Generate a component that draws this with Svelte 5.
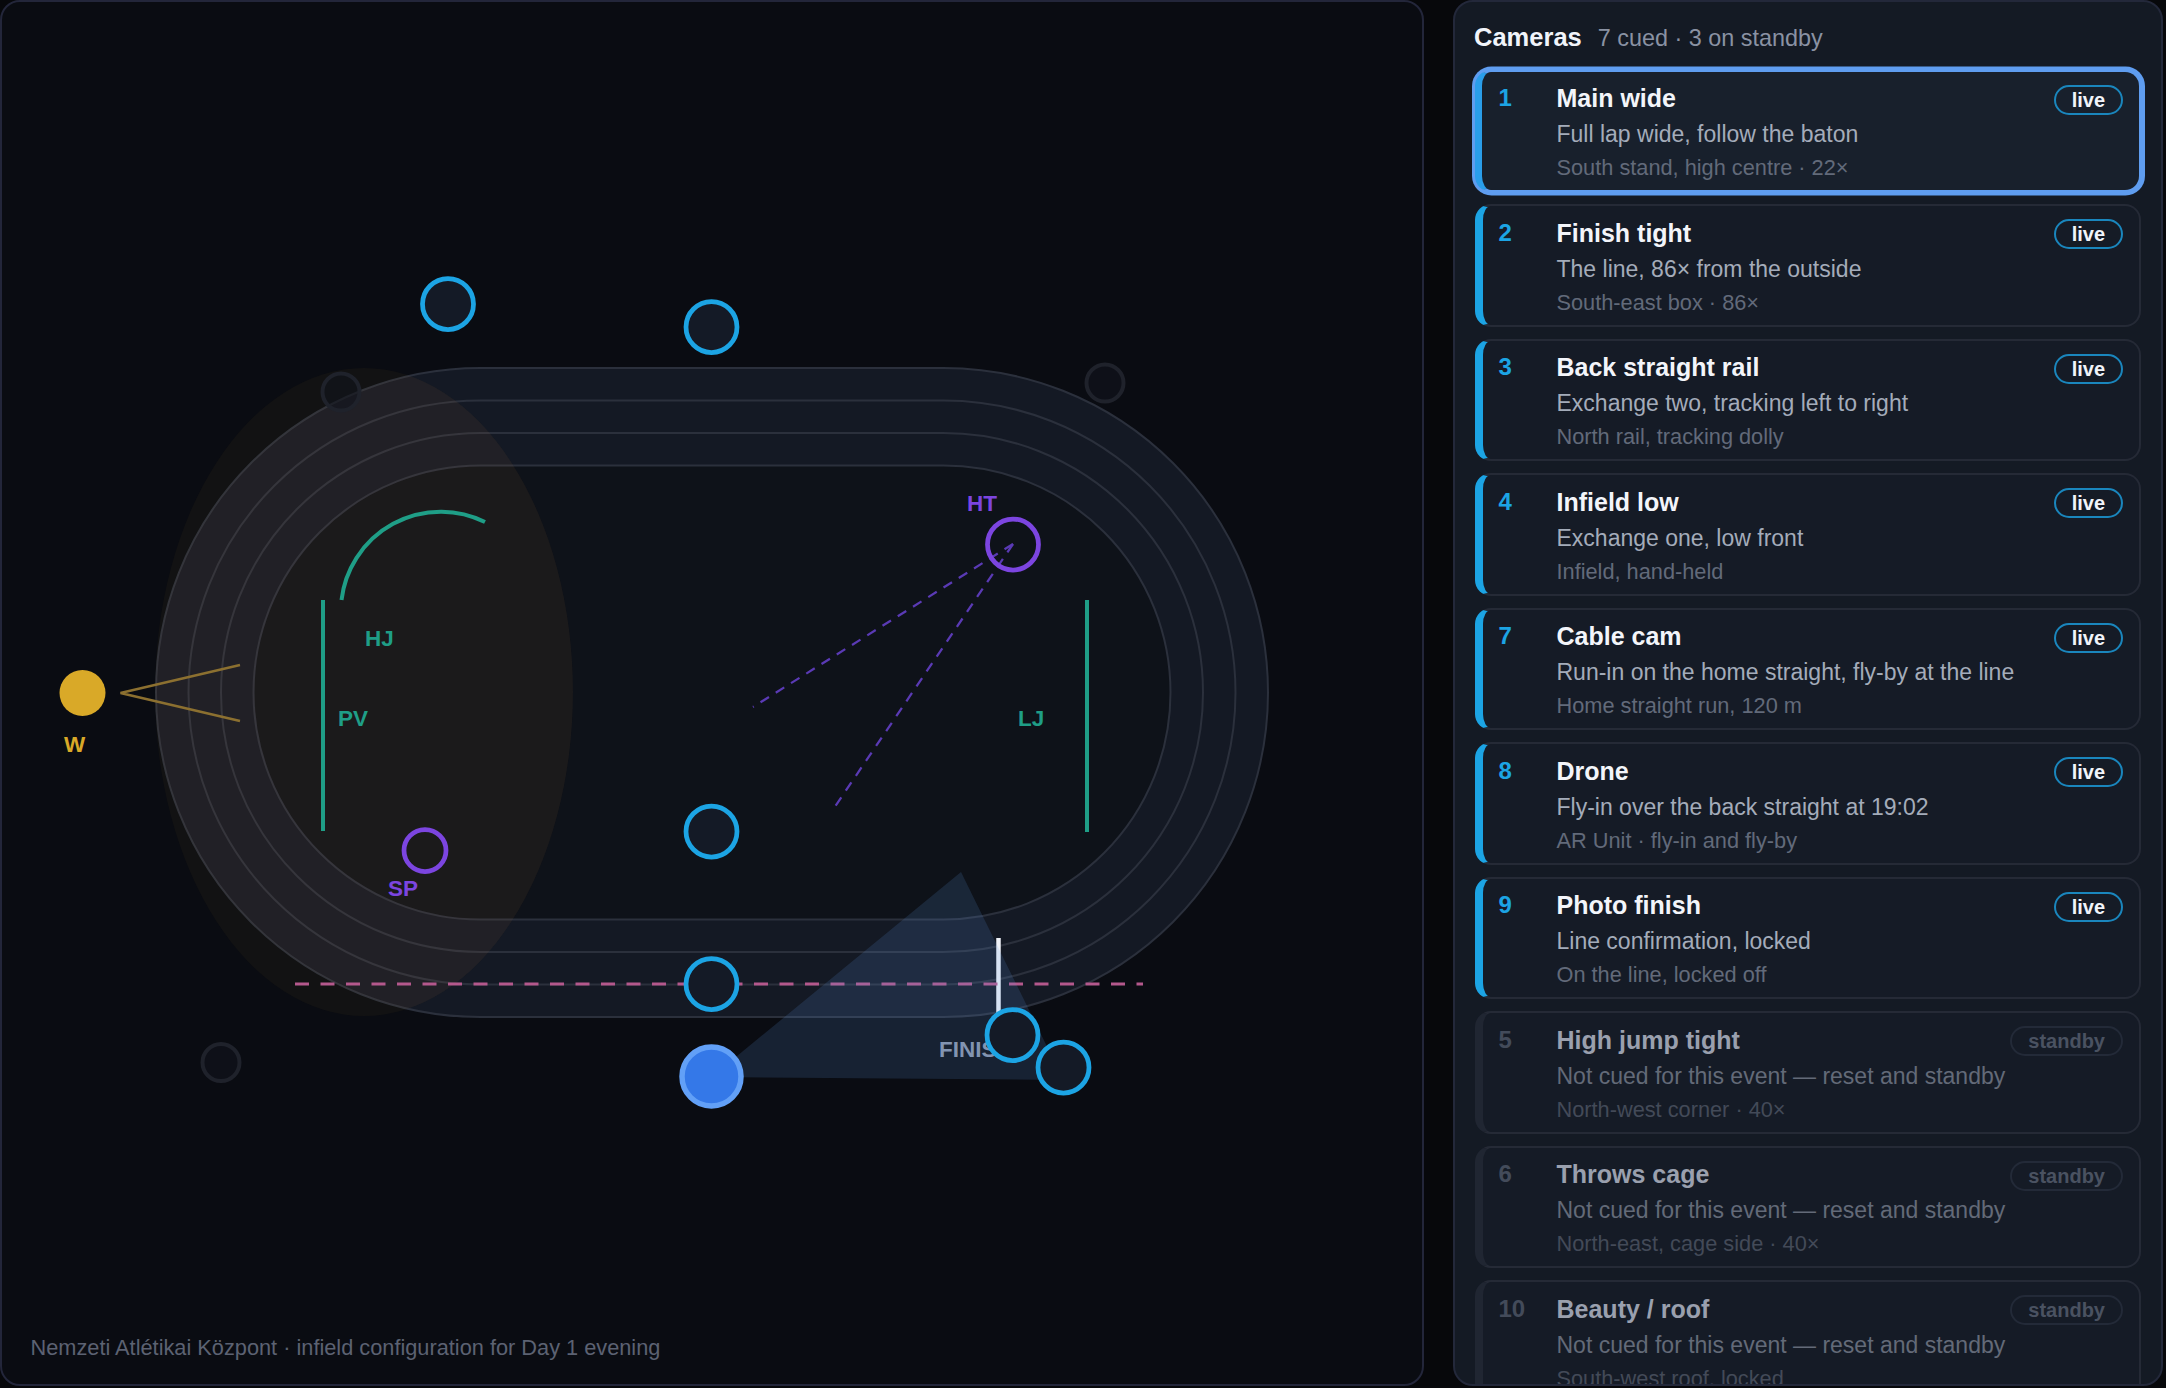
<script>
  const cameras = [
    { n: 1, name: 'Main wide', desc: 'Full lap wide, follow the baton', meta: 'South stand, high centre · 22×', live: true, selected: true },
    { n: 2, name: 'Finish tight', desc: 'The line, 86× from the outside', meta: 'South-east box · 86×', live: true },
    { n: 3, name: 'Back straight rail', desc: 'Exchange two, tracking left to right', meta: 'North rail, tracking dolly', live: true },
    { n: 4, name: 'Infield low', desc: 'Exchange one, low front', meta: 'Infield, hand-held', live: true },
    { n: 7, name: 'Cable cam', desc: 'Run-in on the home straight, fly-by at the line', meta: 'Home straight run, 120 m', live: true },
    { n: 8, name: 'Drone', desc: 'Fly-in over the back straight at 19:02', meta: 'AR Unit · fly-in and fly-by', live: true },
    { n: 9, name: 'Photo finish', desc: 'Line confirmation, locked', meta: 'On the line, locked off', live: true },
    { n: 5, name: 'High jump tight', desc: 'Not cued for this event — reset and standby', meta: 'North-west corner · 40×', live: false },
    { n: 6, name: 'Throws cage', desc: 'Not cued for this event — reset and standby', meta: 'North-east, cage side · 40×', live: false },
    { n: 10, name: 'Beauty / roof', desc: 'Not cued for this event — reset and standby', meta: 'South-west roof, locked', live: false }
  ];
  const lanes = [0, 32.5, 65, 97.5];
  const pins = [
    [448, 304], [711.5, 327], [711.5, 831.5], [711.5, 984], [1012.5, 1035], [1063.5, 1067.5]
  ];
  const dim = [[341, 392], [1105, 383], [221, 1062.5]];
</script>

<div class="page">
  <section class="map">
    <svg class="venue" viewBox="0 0 1424 1386" aria-label="Venue map">
      <defs>
        <clipPath id="trackclip">
          <rect x="156" y="368" width="1112" height="649" rx="324.5" />
        </clipPath>
      </defs>
      <rect class="band" x="156" y="368" width="1112" height="649" rx="324.5" />
      <rect class="infield" x="253.5" y="465.5" width="917" height="454" rx="227" />
      {#each lanes as d}
        <rect class="lane" x={156 + d} y={368 + d} width={1112 - 2 * d} height={649 - 2 * d} rx={324.5 - d} />
      {/each}
      <ellipse class="zone" cx="364" cy="692" rx="209" ry="324" />
      <ellipse class="zone extra" cx="364" cy="692" rx="209" ry="324" clip-path="url(#trackclip)" />

      <path class="field" d="M341.5 600A100 100 0 0 1 485 522" />
      <line class="field" x1="323" y1="600" x2="323" y2="831" />
      <line class="field" x1="1087" y1="600" x2="1087" y2="832" />
      <text class="lbl green" x="365" y="646">HJ</text>
      <text class="lbl green" x="338" y="726">PV</text>
      <text class="lbl green" x="1018" y="726">LJ</text>

      <line class="throw" x1="1013" y1="544" x2="753" y2="707" />
      <line class="throw" x1="1013" y1="544" x2="832" y2="811" />
      <circle class="throwpin" cx="1013" cy="544.5" r="25.5" />
      <circle class="throwpin" cx="425" cy="850.5" r="21" />
      <text class="lbl purple" x="967" y="511">HT</text>
      <text class="lbl purple" x="388" y="896">SP</text>

      <circle class="wind" cx="82.5" cy="693" r="23" />
      <path class="windcone" d="M240 665L120.5 693L240 721" />
      <text class="lbl gold" x="64" y="752">W</text>

      <text class="lbl grey" x="939" y="1057">FINISH</text>
      <line class="finish" x1="998.5" y1="938" x2="998.5" y2="1020" />
      <line class="cut" x1="295" y1="984" x2="1143" y2="984" />
      <path class="cone" d="M711.5 1077L961 872L1063.5 1080Z" />

      {#each dim as [x, y]}
        <circle class="idle" cx={x} cy={y} r="18.5" />
      {/each}
      {#each pins as [x, y]}
        <circle class="pin" cx={x} cy={y} r="25.5" />
      {/each}
      <circle class="main" cx="711.5" cy="1076.5" r="29.5" />
    </svg>
    <p class="caption">Nemzeti Atlétikai Központ · infield configuration for Day 1 evening</p>
  </section>

  <aside class="side">
    <header class="head">
      <h2>Cameras</h2>
      <span>7 cued · 3 on standby</span>
    </header>
    <ul class="list">
      {#each cameras as c}
        <li class="card" class:selected={c.selected} class:off={!c.live}>
          <b class="num">{c.n}</b>
          <div class="body">
            <div class="name">{c.name}</div>
            <div class="desc">{c.desc}</div>
            <div class="meta">{c.meta}</div>
          </div>
          <span class="badge">{c.live ? 'live' : 'standby'}</span>
        </li>
      {/each}
    </ul>
  </aside>
</div>

<style>
  :global(body) {
    margin: 0;
    background: #07080b;
    font-family: "Liberation Sans", Arial, sans-serif;
  }
  .page {
    display: flex;
    gap: 29px;
    width: 2166px;
    height: 1388px;
    padding: 0 3px 2px 0;
    box-sizing: border-box;
    overflow: hidden;
  }
  .map {
    position: relative;
    flex: 0 0 1424px;
    box-sizing: border-box;
    border: 2px solid #23263a;
    border-radius: 20px;
    background: #0a0c12;
    overflow: hidden;
  }
  .venue {
    position: absolute;
    left: -2px;
    top: -2px;
    width: 1424px;
    height: 1386px;
  }
  .caption {
    position: absolute;
    left: 28.5px;
    bottom: 22px;
    margin: 0;
    font-size: 21.75px;
    line-height: 28px;
    color: #5c6272;
  }
  .band { fill: #141924; }
  .infield { fill: #0e1219; }
  .lane { fill: none; stroke: #2b303c; stroke-width: 2; }
  .zone { fill: rgba(212, 165, 40, 0.045); }
  .zone.extra { fill: rgba(235, 140, 110, 0.022); }
  .field { fill: none; stroke: #1f9e87; stroke-width: 4; }
  .lbl { font-size: 22.5px; font-weight: 700; }
  .green { fill: #1f9e87; }
  .purple { fill: #7c45e0; }
  .gold { fill: #d9a928; }
  .grey { fill: #8a94a8; }
  .throw { stroke: #5a3ab5; stroke-width: 2.25; stroke-dasharray: 10 8; }
  .throwpin { fill: none; stroke: #7c45e0; stroke-width: 4.75; }
  .wind { fill: #d9a928; }
  .windcone { fill: none; stroke: #8c7030; stroke-width: 2.5; }
  .finish { stroke: #eef1f7; stroke-width: 4.5; }
  .cut { stroke: #b4588c; stroke-width: 3; stroke-dasharray: 14 11.5; }
  .cone { fill: rgba(96, 150, 225, 0.16); }
  .idle { fill: #10141c; fill-opacity: 0.6; stroke: #1f222b; stroke-width: 4; }
  .pin { fill: #141a26; stroke: #1ca4e4; stroke-width: 4.75; }
  .main { fill: #3478e8; stroke: #62a0f7; stroke-width: 5.5; }

  .side {
    flex: 1;
    min-width: 0;
    box-sizing: border-box;
    padding: 0 20px;
    border: 2px solid #23283a;
    border-radius: 20px;
    background: #141a24;
    overflow: hidden;
  }
  .head {
    display: flex;
    align-items: baseline;
    gap: 16px;
    height: 67.5px;
    margin-left: -1px;
    padding-top: 20px;
    box-sizing: border-box;
  }
  .head h2 {
    margin: 0;
    font-size: 25.5px;
    line-height: 30px;
    font-weight: 700;
    color: #f1f4fa;
  }
  .head span {
    font-size: 23.4px;
    color: #8a92a3;
  }
  .list {
    display: flex;
    flex-direction: column;
    gap: 12px;
    margin: 0;
    padding: 0;
    list-style: none;
  }
  .card {
    display: grid;
    grid-template-columns: 58px 1fr auto;
    align-items: start;
    box-sizing: border-box;
    height: 122.5px;
    padding: 11.5px 16px 0 15.5px;
    border: 2px solid #252a36;
    border-left: 8px solid #1ca4e4;
    border-radius: 16px;
    background: #151b26;
  }
  .card.selected {
    padding-left: 16.5px;
    border-color: #5f9df0;
    border-left-width: 7px;
    border-left-color: #2a9eea;
    background: #18202c;
    box-shadow: 0.5px 0 0 3.5px #5f9df0;
  }
  .card.off {
    border-left-color: #202632;
  }
  .num {
    font-size: 24px;
    line-height: 30px;
    color: #1ca4e4;
  }
  .name {
    font-size: 25px;
    line-height: 30px;
    font-weight: 700;
    color: #f3f5fa;
  }
  .desc {
    margin-top: 4px;
    font-size: 23px;
    line-height: 34px;
    color: #a4acba;
  }
  .meta {
    font-size: 21.75px;
    line-height: 34px;
    color: #626a7a;
  }
  .badge {
    box-sizing: border-box;
    height: 30px;
    margin-top: 1.5px;
    padding: 0 16px;
    border: 2px solid #1a86bd;
    border-radius: 15px;
    font-size: 20px;
    font-weight: 700;
    line-height: 26px;
    color: #f1f4fa;
  }
  .off .num { color: #434b5a; }
  .off .name { color: #9aa0ae; }
  .off .desc { color: #636a78; }
  .off .meta { color: #434a58; }
  .off .badge { border-color: #232a38; color: #4a5261; }
</style>
